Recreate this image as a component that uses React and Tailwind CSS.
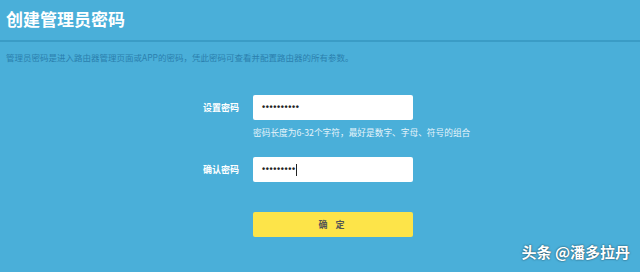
import React from 'react';

const font = { fontFamily: '"Noto Sans CJK SC", "Liberation Sans", sans-serif' };
const dots = { fontFamily: '"Liberation Sans", sans-serif' };

const Field = ({ label, value, caret }) => (
  <div className="flex items-center">
    <label className="w-[50px] text-[9px] font-bold text-white">{label}</label>
    <div className="flex h-[25px] w-[160px] items-center rounded-[2px] bg-white px-[9px]">
      <span className="text-[9px] font-bold leading-none tracking-[0.6px] text-[#222]" style={dots}>{value}</span>
      {caret && <span className="h-[12px] w-px bg-[#222]" />}
    </div>
  </div>
);

const App = () => {
  return (
    <div className="relative h-[272px] w-[640px] overflow-hidden bg-[#4aafd9]" style={font}>
      <div className="px-[6px] pt-[6px]">
        <h1 className="text-[17px] font-bold leading-[26px] text-white">创建管理员密码</h1>
      </div>
      <div className="mt-[8px] h-[2px] bg-[#3a9cc6]" />
      <p className="px-[6px] pt-[9px] text-[8.5px] leading-[12px] text-[#2a7fae]">
        管理员密码是进入路由器管理页面或APP的密码，凭此密码可查看并配置路由器的所有参数。
      </p>

      <div className="ml-[203px] mt-[32px] flex flex-col">
        <Field label="设置密码" value="••••••••••" />
        <p className="ml-[50px] mt-[7px] text-[8.7px] leading-[12px] text-[#e6f4fb]">
          密码长度为6-32个字符，最好是数字、字母、符号的组合
        </p>
        <div className="mt-[18px]">
          <Field label="确认密码" value="•••••••••" caret />
        </div>
        <button className="ml-[50px] mt-[30px] h-[25px] w-[160px] rounded-[2px] bg-[#fde449] text-[9px] font-bold tracking-[3px] text-[#555]">
          确 定
        </button>
      </div>

      <div className="absolute bottom-[9px] right-[10px] text-[15px] font-bold text-white [text-shadow:0_0_2px_rgba(0,0,0,0.7)]">
        头条 @潘多拉丹
      </div>
    </div>
  );
};

export default App;
